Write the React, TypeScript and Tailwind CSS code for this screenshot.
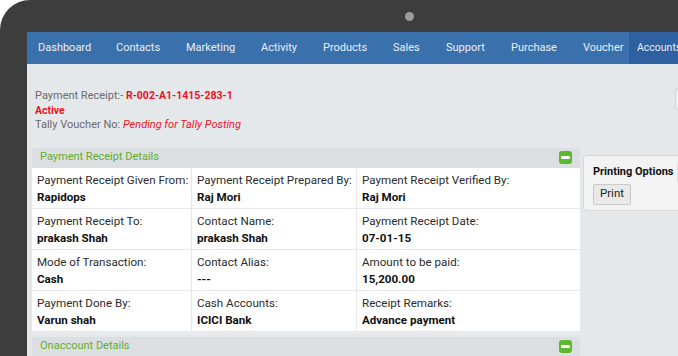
import React from "react";

const navItems: { label: string; w: string }[] = [
  { label: "Dashboard", w: "w-[78px]" },
  { label: "Contacts", w: "w-[70px]" },
  { label: "Marketing", w: "w-[75px]" },
  { label: "Activity", w: "w-[62px]" },
  { label: "Products", w: "w-[70px]" },
  { label: "Sales", w: "w-[53px]" },
  { label: "Support", w: "w-[65px]" },
  { label: "Purchase", w: "w-[72px]" },
  { label: "Voucher", w: "w-[46px]" },
];

const rows: [string, string][][] = [
  [
    ["Payment Receipt Given From:", "Rapidops"],
    ["Payment Receipt Prepared By:", "Raj Mori"],
    ["Payment Receipt Verified By:", "Raj Mori"],
  ],
  [
    ["Payment Receipt To:", "prakash Shah"],
    ["Contact Name:", "prakash Shah"],
    ["Payment Receipt Date:", "07-01-15"],
  ],
  [
    ["Mode of Transaction:", "Cash"],
    ["Contact Alias:", "---"],
    ["Amount to be paid:", "15,200.00"],
  ],
  [
    ["Payment Done By:", "Varun shah"],
    ["Cash Accounts:", "ICICI Bank"],
    ["Receipt Remarks:", "Advance payment"],
  ],
];

const colW = ["w-[160px]", "w-[165px]", "w-[223px]"];

function Minus() {
  return (
    <div className="w-[13px] h-[13px] rounded-[3px] bg-[#5cb82c] flex items-center justify-center">
      <div className="w-[9px] h-[3px] bg-white rounded-[1px]" />
    </div>
  );
}

function PanelHeader({ title }: { title: string }) {
  return (
    <div className="h-[20px] bg-[#dcdfe2] rounded-t-[4px] flex items-center justify-between pl-[8px] pr-[8px]">
      <span className="text-[11px] text-[#62ad2c]">{title}</span>
      <Minus />
    </div>
  );
}

export default function App() {
  return (
    <div
      className="w-[678px] h-[356px] overflow-hidden bg-white"
      style={{ fontFamily: "Roboto, 'Liberation Sans', sans-serif" }}
    >
      <div className="w-full h-full bg-[#3d3d3d] rounded-tl-[30px] flex flex-col pl-[27px]">
        <div className="h-[32px] flex items-center pl-[378px] shrink-0">
          <div className="w-[9px] h-[9px] rounded-full bg-[#9b9b9b]" />
        </div>
        <div className="flex-1 bg-[#e5e8eb] flex flex-col min-h-0">
          <div className="h-[32px] bg-[#3a71ac] flex items-center pl-[11px] shrink-0">
            {navItems.map((n) => (
              <div key={n.label} className={`${n.w} shrink-0 text-[11px] text-[#e8eef6] whitespace-nowrap`}>
                {n.label}
              </div>
            ))}
            <div className="h-full flex-1 min-w-0 bg-[#2f60a0] flex items-center pl-[8px] text-[10.5px] text-[#e8eef6] whitespace-nowrap overflow-hidden">
              Accounts
            </div>
          </div>

          <div className="flex justify-between pt-[25px]">
            <div className="pl-[8px] text-[11px] leading-[14.5px] text-[#6a6a6a]">
              <div>
                Payment Receipt:- <span className="font-bold text-[10.5px] text-[#e8141c]">R-002-A1-1415-283-1</span>
              </div>
              <div className="font-bold text-[10.5px] text-[#e8141c]">Active</div>
              <div>
                Tally Voucher No: <span className="italic text-[#e8141c]">Pending for Tally Posting</span>
              </div>
            </div>
            <div className="w-[3px] h-[22px] mt-[-1px] bg-[#eef0f2] border border-r-0 border-[#d4d7da] rounded-l-[3px]" />
          </div>

          <div className="flex pl-[5px] mt-[15px] gap-[3px]">
            <div className="w-[548px] shrink-0 flex flex-col">
              <div className="flex flex-col">
                <PanelHeader title="Payment Receipt Details" />
                <div className="bg-white flex flex-col">
                  {rows.map((r, i) => (
                    <div key={i} className="flex h-[41px] border-b border-[#e6e8ea]">
                      {r.map(([label, value], j) => (
                        <div
                          key={j}
                          className={`${colW[j]} shrink-0 pl-[5px] pt-[4px] ${j < 2 ? "border-r border-[#e6e8ea]" : ""}`}
                        >
                          <div className="text-[11.6px] leading-[17px] text-[#2b2b2b] whitespace-nowrap">{label}</div>
                          <div className="text-[11.6px] leading-[17px] font-bold text-[#111] whitespace-nowrap">{value}</div>
                        </div>
                      ))}
                    </div>
                  ))}
                </div>
                <div className="h-[2px] bg-[#e8eaec]" />
              </div>
              <div className="mt-[3px]">
                <PanelHeader title="Onaccount Details" />
              </div>
            </div>

            <div className="flex-1 mt-[7px] h-[56px] bg-[#f3f3f3] border border-r-0 border-[#d8d8d8] rounded-l-[4px] pl-[9px] pt-[8px]">
              <div className="flex items-center">
                <span className="text-[11px] font-bold text-[#111] whitespace-nowrap">Printing Options</span>
                <div className="ml-[4px] flex-1 h-[18px] bg-white border border-r-0 border-[#ddd]" />
              </div>
              <div className="mt-[2px] w-[38px] h-[21px] bg-[#e9e9e9] border border-[#c9c9c9] rounded-[2px] flex items-center justify-center text-[11.5px] text-[#222]">
                Print
              </div>
            </div>
          </div>
        </div>
      </div>
    </div>
  );
}
